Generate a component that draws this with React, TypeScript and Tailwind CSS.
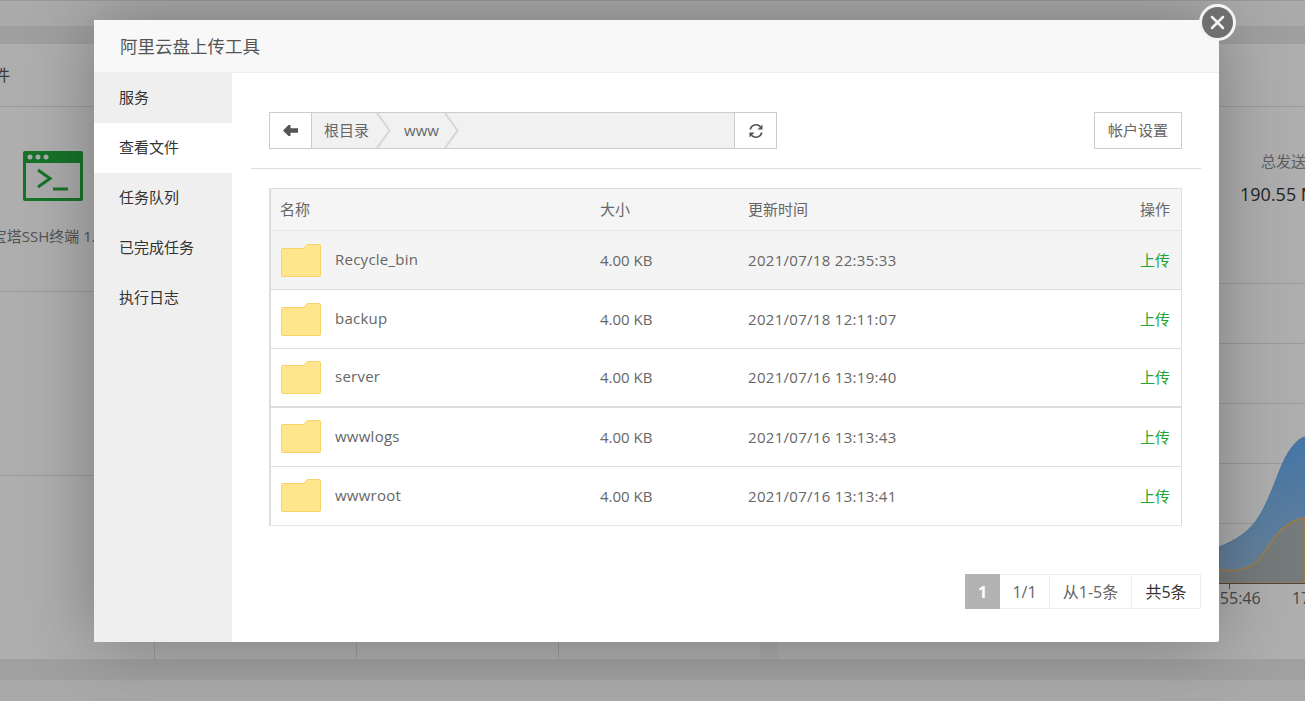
const rows = [
  { name: "Recycle_bin", time: "2021/07/18 22:35:33" },
  { name: "backup", time: "2021/07/18 12:11:07" },
  { name: "server", time: "2021/07/16 13:19:40" },
  { name: "wwwlogs", time: "2021/07/16 13:13:43" },
  { name: "wwwroot", time: "2021/07/16 13:13:41" },
];

const menu = ["服务", "查看文件", "任务队列", "已完成任务", "执行日志"];

const Folder = () => (
  <svg width="40" height="33" viewBox="0 0 40 33" className="shrink-0">
    <path
      d="M1.500 32.500 A1 1 0 0 1 .5 31.500 V5.500 A1 1 0 0 1 1.500 4.500 H23 L25.500 1.200 A1.500 1.500 0 0 1 26.700 .5 H38.500 A1 1 0 0 1 39.500 1.500 V31.500 A1 1 0 0 1 38.500 32.500 Z"
      fill="#ffe68d"
      stroke="#f6d36b"
      strokeWidth="1"
    />
  </svg>
);

const Chevron = () => (
  <svg width="15" height="35" viewBox="0 0 15 35" className="shrink-0">
    <path d="M1 0 L13.500 17.500 L1 35" fill="none" stroke="#d5d5dc" strokeWidth="2" />
  </svg>
);

const BackArrow = () => (
  <svg width="15" height="11" viewBox="0 0 15 11">
    <path d="M0 5.500 L5.500 0 H7.500 V3.200 H15 V7.800 H7.500 V11 H5.500 Z" fill="#555" />
  </svg>
);

const Refresh = () => (
  <svg width="16" height="16" viewBox="0 0 16 16">
    <path d="M2.200 6.500 A6 6 0 0 1 12.500 3.800" fill="none" stroke="#555" strokeWidth="1.600" />
    <path d="M13.800 9.500 A6 6 0 0 1 3.500 12.200" fill="none" stroke="#555" strokeWidth="1.600" />
    <path d="M14.500 1.500 V6.500 H9.500 Z" fill="#555" />
    <path d="M1.500 14.500 V9.500 H6.500 Z" fill="#555" />
  </svg>
);

const Terminal = () => (
  <svg width="60" height="50" viewBox="0 0 60 50">
    <rect x="0" y="0" width="60" height="50" rx="2" fill="#20a53a" />
    <rect x="3" y="12" width="54" height="35" fill="#f4f4f4" />
    <circle cx="7" cy="6" r="2.500" fill="#f4f4f4" />
    <circle cx="15" cy="6" r="2.500" fill="#f4f4f4" />
    <circle cx="23" cy="6" r="2.500" fill="#f4f4f4" />
    <path d="M15 19 L27 27.500 L15 36" fill="none" stroke="#20a53a" strokeWidth="3" />
    <path d="M30 38 H45" fill="none" stroke="#20a53a" strokeWidth="3" />
  </svg>
);

const Chart = () => (
  <svg width="527" height="270" viewBox="778 340 527 270" className="block">
    <defs>
      <linearGradient id="blueFill" x1="0" y1="0" x2="0" y2="1">
        <stop offset="0" stopColor="#62a8ee" />
        <stop offset="1" stopColor="#98bcdc" />
      </linearGradient>
    </defs>
    <path d="M778 343.500 H1305 M778 403.500 H1305 M778 463.500 H1305 M778 523.500 H1305" stroke="#dcdcdc" strokeWidth="1" />
    <path
      d="M1219 547 C1235 541 1250 532 1260 515 C1272 495 1280 465 1288 453 C1293 445 1299 438 1305 437 V583 H1219 Z"
      fill="url(#blueFill)"
      stroke="#6aa8e0"
    />
    <path
      d="M1219 570 C1232 571 1245 571 1255 563 C1265 555 1272 538 1282 529 C1290 522 1298 519 1305 518 V583 H1219 Z"
      fill="#a8b0b0"
      stroke="#ecb060"
      strokeWidth="1.500"
    />
    <path d="M778 583.500 H1305 M1229.500 583 V589" stroke="#666" strokeWidth="1" />
    <text x="1229" y="604" fontSize="16" fill="#666" textAnchor="middle" fontFamily="Open Sans">
      17:55:46
    </text>
    <text x="1292" y="604" fontSize="16" fill="#666" fontFamily="Open Sans">
      17:56:46
    </text>
  </svg>
);

export default function App() {
  return (
    <div className="relative h-[701px] w-[1305px] overflow-hidden bg-[#f3f3f3] font-['Open_Sans','Noto_Sans_CJK_SC',sans-serif] text-[#666]">
      {/* page behind the dialog */}
      <div className="h-[26px] border-t border-[#ddd] bg-[#f4f4f4]" />
      <div className="h-[18px] bg-[#e4e4e4]" />
      <div className="flex h-[615px] gap-[18px]">
        <div className="flex h-full w-[760px] flex-col bg-[#fafafa]">
          <div className="flex h-[63px] items-center border-b border-[#ddd] text-[16px] text-[#555]">
            <span className="-ml-[22px]">软件</span>
          </div>
          <div className="-ml-[48px] flex h-[185px] w-[202px] flex-col items-center border-b border-[#ddd] pt-[44px]">
            <Terminal />
            <span className="mr-[10px] mt-[24px] whitespace-nowrap text-[15px] text-[#777]">宝塔SSH终端 1.2</span>
          </div>
          <div className="h-[184px] border-b border-[#ddd]" />
          <div className="flex flex-1">
            <div className="w-[155px] border-r border-[#ddd]" />
            <div className="w-[202px] border-r border-[#ddd]" />
            <div className="w-[202px] border-r border-[#ddd]" />
          </div>
        </div>
        <div className="w-[527px] bg-[#fafafa]">
          <div className="h-[63px] border-b border-[#ddd]" />
          <div className="h-[177px] border-b border-[#ddd] pl-[462px] pt-[43px]">
            <div className="ml-[21px] whitespace-nowrap text-[15px] text-[#888]">总发送</div>
            <div className="mt-[8px] whitespace-nowrap text-[18px] text-[#333]">190.55 MB</div>
          </div>
          <div className="mt-[56px]">
            <Chart />
          </div>
        </div>
      </div>
      <div className="h-[21px] bg-[#e6e6e6]" />
      <div className="h-[21px] bg-[#f3f3f3]" />

      {/* scrim */}
      <div className="absolute inset-0 bg-black/30" />

      {/* dialog */}
      <div className="absolute left-[94px] top-[20px] flex h-[622px] w-[1125px] flex-col rounded-[2px] bg-white shadow-[0_0_70px_rgba(0,0,0,0.3)]">
        <div className="flex h-[53px] shrink-0 items-center border-b border-[#eee] bg-[#f8f8f8] pl-[26px] pt-[2px] text-[17.5px] leading-none text-[#555]">
          阿里云盘上传工具
        </div>
        <div className="flex min-h-0 flex-1">
          <div className="w-[138px] shrink-0 bg-[#efefef]">
            {menu.map((item) => (
              <div
                key={item}
                className={`flex h-[50px] items-center pb-[1px] pl-[25px] text-[15px] text-[#333] ${
                  item === "查看文件" ? "bg-white" : ""
                }`}
              >
                {item}
              </div>
            ))}
          </div>
          <div className="min-w-0 flex-1 pl-[19px] pr-[18px] pt-[39px]">
            <div className="flex h-[57px] items-start justify-between border-b border-[#ddd] px-[18px] pr-[19px] text-[15px]">
              <div className="flex h-[37px] w-[508px] border border-[#ccc] bg-[#f1f1f1]">
                <div className="flex w-[42px] items-center justify-center border-r border-[#ccc] bg-white">
                  <BackArrow />
                </div>
                <span className="ml-[12px] flex items-center">根目录</span>
                <span className="ml-[7px]">
                  <Chevron />
                </span>
                <span className="ml-[13px] flex items-center">www</span>
                <span className="ml-[5px]">
                  <Chevron />
                </span>
                <div className="ml-auto flex w-[42px] items-center justify-center border-l border-[#ccc] bg-white">
                  <Refresh />
                </div>
              </div>
              <div className="flex h-[37px] w-[88px] items-center justify-center border border-[#ccc]">
                帐户设置
              </div>
            </div>

            <div className="ml-[18px] mr-[19px] mt-[19px] border border-l-2 border-[#ddd] border-b-[#e8e8e8] text-[15px]">
              <div className="grid h-[42px] grid-cols-[320px_148px_1fr_auto] items-center border-b border-[#e5e5e5] bg-[#f5f5f5] pl-[9px] pr-[11px]">
                <span>名称</span>
                <span>大小</span>
                <span>更新时间</span>
                <span>操作</span>
              </div>
              {rows.map((row, i) => (
                <div
                  key={row.name}
                  className={`grid grid-cols-[320px_148px_1fr_auto] items-center pl-[9px] pr-[11px] ${
                    i >= 3 ? "h-[58.500px]" : "h-[59px]"
                  } ${i === 0 ? "bg-[#f4f4f4]" : ""} ${
                    i === 2 ? "border-b-2 border-[#ddd]" : i < 4 ? "border-b border-[#ddd]" : ""
                  }`}
                >
                  <span className="flex items-center gap-[14px] pl-[1px] tracking-[0.25px]">
                    <Folder />
                    <span className="pb-[2px]">{row.name}</span>
                  </span>
                  <span>4.00 KB</span>
                  <span className="tracking-[0.3px]">{row.time}</span>
                  <span className="text-[#20a53a]">上传</span>
                </div>
              ))}
            </div>

            <div className="mt-[48px] flex justify-end text-[16px]">
              <div className="flex h-[35px] w-[236px] border border-[#eee]">
                <span className="-my-px -ml-px flex h-[35px] w-[35px] items-center justify-center bg-[#b3b3b3] font-bold text-white">
                  1
                </span>
                <span className="flex w-[50px] items-center justify-center border-r border-[#eee]">1/1</span>
                <span className="flex w-[82px] items-center justify-center border-r border-[#eee]">从1-5条</span>
                <span className="flex flex-1 items-center justify-center text-[#333]">共5条</span>
              </div>
            </div>
          </div>
        </div>

        {/* close button */}
        <div className="absolute left-[1105px] top-[-16px] flex h-[37px] w-[37px] items-center justify-center rounded-full border-[3px] border-[#f4f4f4] bg-[#6f6f6f]">
          <svg width="15" height="15" viewBox="0 0 15 15">
            <path d="M2 2 L13 13 M13 2 L2 13" stroke="#f4f4f4" strokeWidth="2.500" strokeLinecap="round" />
          </svg>
        </div>
      </div>
    </div>
  );
}
